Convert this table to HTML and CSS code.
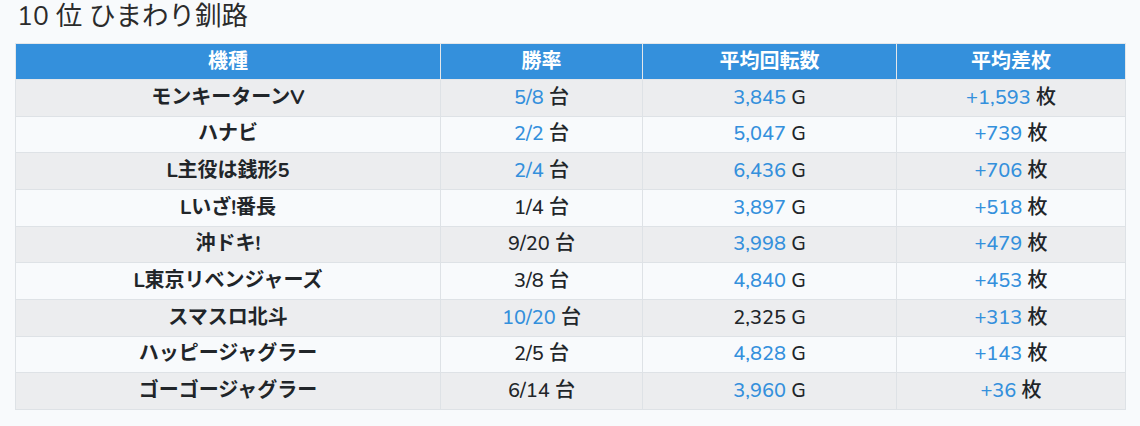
FILE: index.html
```html
<!DOCTYPE html>
<html lang="ja">
<head>
<meta charset="utf-8">
<title>10 位 ひまわり釧路</title>
<link rel="stylesheet" href="styles.css">
</head>
<body>
<div class="page">
  <h2 class="title">10 位 ひまわり釧路</h2>
  <table class="rank">
    <colgroup>
      <col class="c1"><col class="c2"><col class="c3"><col class="c4">
    </colgroup>
    <thead>
      <tr><th>機種</th><th>勝率</th><th>平均回転数</th><th>平均差枚</th></tr>
    </thead>
    <tbody>
      <tr><td class="name">モンキーターンV</td><td><span class="hi">5/8</span> 台</td><td><span class="hi">3,845</span> G</td><td><span class="hi">+1,593</span> 枚</td></tr>
      <tr><td class="name">ハナビ</td><td><span class="hi">2/2</span> 台</td><td><span class="hi">5,047</span> G</td><td><span class="hi">+739</span> 枚</td></tr>
      <tr><td class="name">L主役は銭形5</td><td><span class="hi">2/4</span> 台</td><td><span class="hi">6,436</span> G</td><td><span class="hi">+706</span> 枚</td></tr>
      <tr><td class="name">Lいざ!番長</td><td>1/4 台</td><td><span class="hi">3,897</span> G</td><td><span class="hi">+518</span> 枚</td></tr>
      <tr><td class="name">沖ドキ!</td><td>9/20 台</td><td><span class="hi">3,998</span> G</td><td><span class="hi">+479</span> 枚</td></tr>
      <tr><td class="name">L東京リベンジャーズ</td><td>3/8 台</td><td><span class="hi">4,840</span> G</td><td><span class="hi">+453</span> 枚</td></tr>
      <tr><td class="name">スマスロ北斗</td><td><span class="hi">10/20</span> 台</td><td>2,325 G</td><td><span class="hi">+313</span> 枚</td></tr>
      <tr><td class="name">ハッピージャグラー</td><td>2/5 台</td><td><span class="hi">4,828</span> G</td><td><span class="hi">+143</span> 枚</td></tr>
      <tr><td class="name">ゴーゴージャグラー</td><td>6/14 台</td><td><span class="hi">3,960</span> G</td><td><span class="hi">+36</span> 枚</td></tr>
    </tbody>
  </table>
</div>
</body>
</html>
```
FILE: styles.css
```css
html, body {
  margin: 0;
  padding: 0;
  background: #f8fafc;
}
body {
  font-family: "Nunito", "Lato", "Noto Sans CJK JP", sans-serif;
  color: #212529;
}
.page {
  padding: 0 16px 0 15px;
}
.title {
  margin: 0 0 10px 2px;
  font-size: 26.5px;
  font-weight: 400;
  line-height: 33px;
  color: #2b2b2b;
}
.rank {
  width: 1110px;
  border-collapse: collapse;
  table-layout: fixed;
  font-size: 20px;
}
.c1 { width: 425px; }
.c2 { width: 202px; }
.c3 { width: 254px; }
.c4 { width: 229px; }
.rank th,
.rank td {
  border: 1px solid #dee2e6;
  text-align: center;
  padding: 0;
  height: 35.67px;
  line-height: 24px;
}
.rank th {
  background: #3490dc;
  color: #fff;
  font-weight: 700;
  height: 35px;
  border-color: #e4e7ea;
}
.rank td {
  font-weight: 500;
}
.rank tbody tr:nth-child(odd) td {
  background: #ecedef;
}
.rank tbody tr:nth-child(even) td {
  background: #f8fafc;
}
.rank td.name {
  font-weight: 700;
}
.hi {
  color: #3490dc;
}
```
